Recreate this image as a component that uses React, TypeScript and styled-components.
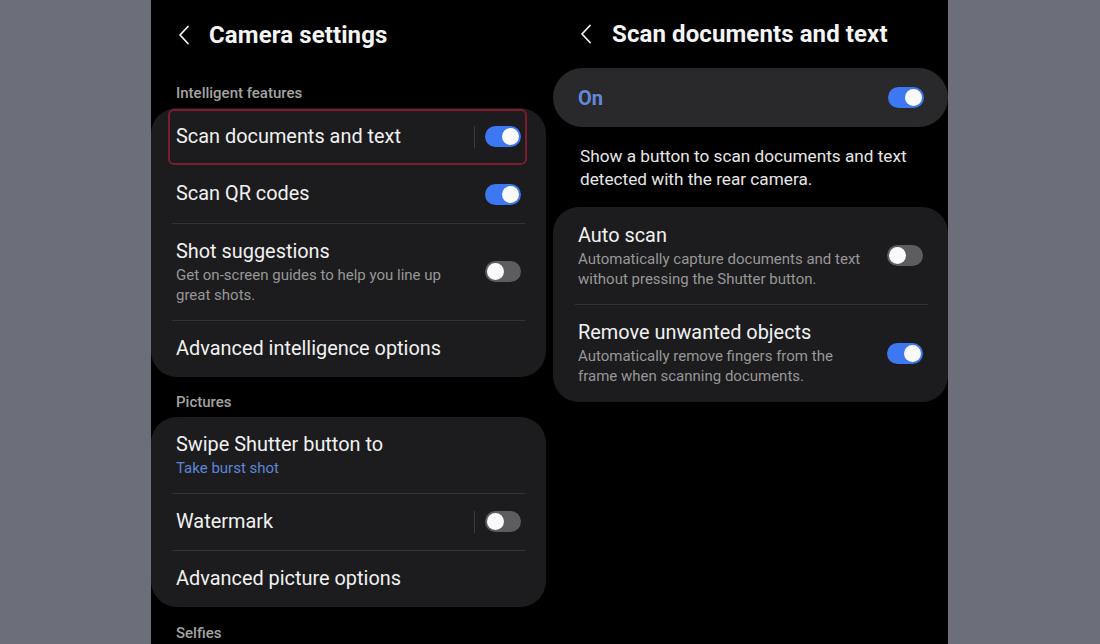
import React from "react";
import styled, { createGlobalStyle } from "styled-components";

const Global = createGlobalStyle`
  html, body { margin: 0; padding: 0; background: #6c6e79; }
  body { font-family: Roboto, "Noto Sans", sans-serif; }
`;

const Page = styled.div`
  width: 1100px;
  height: 644px;
  overflow: hidden;
  display: flex;
  padding-left: 151px;
  box-sizing: border-box;
  background: #6c6e79;
`;

const Stage = styled.div`
  width: 797px;
  height: 644px;
  background: #000;
  display: grid;
  grid-template-columns: 398px 399px;
  overflow: hidden;
`;

const Column = styled.div<{ $side: "left" | "right" }>`
  display: flex;
  flex-direction: column;
  padding-right: ${(p) => (p.$side === "left" ? "3px" : "0")};
  padding-left: ${(p) => (p.$side === "right" ? "4px" : "0")};
`;

const Header = styled.div<{ $h: number; $pad: number; $gap: number }>`
  height: ${(p) => p.$h}px;
  display: flex;
  align-items: center;
  padding-left: ${(p) => p.$pad}px;
  gap: ${(p) => p.$gap}px;
  color: #f4f4f4;
  flex-shrink: 0;
`;

const Title = styled.h1`
  margin: 0;
  font-size: 24px;
  font-weight: 700;
  letter-spacing: 0.1px;
`;

const SectionLabel = styled.div<{ $h: number }>`
  height: ${(p) => p.$h}px;
  display: flex;
  align-items: flex-end;
  padding: 0 0 6px 25px;
  box-sizing: border-box;
  font-size: 15px;
  font-weight: 500;
  line-height: 18px;
  color: #a3a3a3;
  flex-shrink: 0;
`;

const Card = styled.div`
  background: #1c1c1e;
  border-radius: 26px;
  display: flex;
  flex-direction: column;
  flex-shrink: 0;
`;

const Row = styled.div<{ $h: number; $divider?: boolean; $inset?: string }>`
  position: relative;
  height: ${(p) => p.$h}px;
  display: flex;
  align-items: center;
  padding: 0 25px;
  box-sizing: border-box;
  gap: 12px;
  &::before {
    content: "";
    display: ${(p) => (p.$divider ? "block" : "none")};
    position: absolute;
    top: 0;
    left: ${(p) => (p.$inset ? p.$inset.split(" ")[0] : "21px")};
    right: ${(p) => (p.$inset ? p.$inset.split(" ")[1] : "21px")};
    height: 1px;
    background: #333336;
  }
`;

const Texts = styled.div`
  flex: 1;
  display: flex;
  flex-direction: column;
  min-width: 0;
`;

const RowTitle = styled.div`
  font-size: 19.9px;
  line-height: 26px;
  color: #f1f1f1;
`;

const RowSub = styled.div<{ $accent?: boolean }>`
  font-size: 15px;
  line-height: 20px;
  color: ${(p) => (p.$accent ? "#5d86d8" : "#979797")};
`;

const VDivider = styled.div`
  width: 1px;
  height: 22px;
  background: #3a3a3c;
  margin-right: -2px;
`;

const Track = styled.div<{ $on: boolean }>`
  width: 36px;
  height: 21px;
  border-radius: 11px;
  background: ${(p) => (p.$on ? "#3d78f2" : "#5d5d60")};
  display: flex;
  align-items: center;
  justify-content: ${(p) => (p.$on ? "flex-end" : "flex-start")};
  padding: 0 2px;
  box-sizing: border-box;
  flex-shrink: 0;
`;

const Knob = styled.div`
  width: 17px;
  height: 17px;
  border-radius: 50%;
  background: #fafafa;
`;

const Highlight = styled.div`
  position: absolute;
  left: 17px;
  right: 19px;
  top: 1px;
  bottom: 0;
  border: 2px solid #7c1c2c;
  border-radius: 6px;
  pointer-events: none;
`;

const OnPill = styled.div`
  height: 59px;
  border-radius: 30px;
  background: #29292b;
  display: flex;
  align-items: center;
  justify-content: space-between;
  padding: 0 24px 0 25px;
  flex-shrink: 0;
`;

const OnText = styled.div`
  font-size: 20px;
  font-weight: 700;
  color: #6189dc;
`;

const Description = styled.p`
  margin: 0;
  padding: 18px 20px 16px 27px;
  font-size: 17.2px;
  line-height: 23px;
  color: #e6e6e6;
`;

const Chevron = () => (
  <svg width="12" height="20" viewBox="0 0 12 20" fill="none">
    <path d="M10 1.5 L2 10 L10 18.5" stroke="#f2f2f2" strokeWidth="1.8" strokeLinecap="round" strokeLinejoin="round" />
  </svg>
);

const Toggle = ({ on }: { on: boolean }) => (
  <Track $on={on}>
    <Knob />
  </Track>
);

export default function App() {
  return (
    <>
      <Global />
      <Page>
        <Stage>
          <Column $side="left">
            <Header $h={70} $pad={27} $gap={19}>
              <Chevron />
              <Title>Camera settings</Title>
            </Header>
            <SectionLabel $h={38}>Intelligent features</SectionLabel>
            <Card>
              <Row $h={57}>
                <Texts>
                  <RowTitle>Scan documents and text</RowTitle>
                </Texts>
                <VDivider />
                <Toggle on />
                <Highlight />
              </Row>
              <Row $h={58}>
                <Texts>
                  <RowTitle>Scan QR codes</RowTitle>
                </Texts>
                <Toggle on />
              </Row>
              <Row $h={97} $divider>
                <Texts>
                  <RowTitle>Shot suggestions</RowTitle>
                  <RowSub>Get on-screen guides to help you line up great shots.</RowSub>
                </Texts>
                <Toggle on={false} />
              </Row>
              <Row $h={57} $divider>
                <Texts>
                  <RowTitle>Advanced intelligence options</RowTitle>
                </Texts>
              </Row>
            </Card>
            <SectionLabel $h={40}>Pictures</SectionLabel>
            <Card>
              <Row $h={76}>
                <Texts>
                  <RowTitle>Swipe Shutter button to</RowTitle>
                  <RowSub $accent>Take burst shot</RowSub>
                </Texts>
              </Row>
              <Row $h={57} $divider>
                <Texts>
                  <RowTitle>Watermark</RowTitle>
                </Texts>
                <VDivider />
                <Toggle on={false} />
              </Row>
              <Row $h={57} $divider>
                <Texts>
                  <RowTitle>Advanced picture options</RowTitle>
                </Texts>
              </Row>
            </Card>
            <SectionLabel $h={41}>Selfies</SectionLabel>
          </Column>
          <Column $side="right">
            <Header $h={68} $pad={27} $gap={20}>
              <Chevron />
              <Title>Scan documents and text</Title>
            </Header>
            <OnPill>
              <OnText>On</OnText>
              <Toggle on />
            </OnPill>
            <Description>
              Show a button to scan documents and text detected with the rear camera.
            </Description>
            <Card>
              <Row $h={97}>
                <Texts>
                  <RowTitle>Auto scan</RowTitle>
                  <RowSub>Automatically capture documents and text without pressing the Shutter button.</RowSub>
                </Texts>
                <Toggle on={false} />
              </Row>
              <Row $h={98} $divider $inset="22px 20px">
                <Texts>
                  <RowTitle>Remove unwanted objects</RowTitle>
                  <RowSub>Automatically remove fingers from the frame when scanning documents.</RowSub>
                </Texts>
                <Toggle on />
              </Row>
            </Card>
          </Column>
        </Stage>
      </Page>
    </>
  );
}
